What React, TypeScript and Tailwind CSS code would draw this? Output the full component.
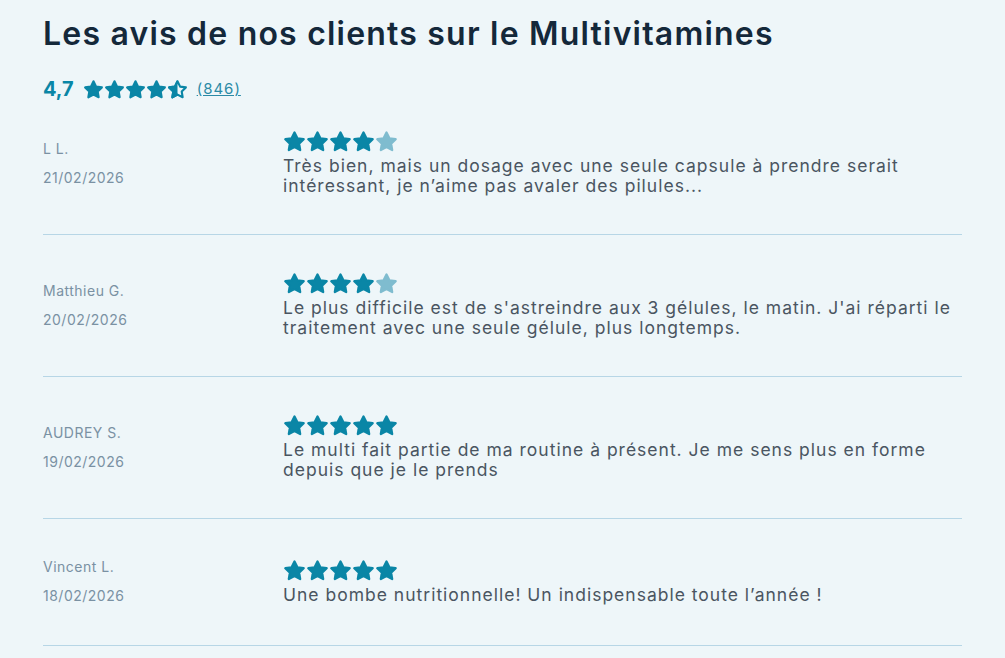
const reviews = [
  {
    name: "L L.",
    date: "21/02/2026",
    rating: 4,
    text: "Très bien, mais un dosage avec une seule capsule à prendre serait intéressant, je n’aime pas avaler des pilules...",
  },
  {
    name: "Matthieu G.",
    date: "20/02/2026",
    rating: 4,
    text: "Le plus difficile est de s'astreindre aux 3 gélules, le matin. J'ai réparti le traitement avec une seule gélule, plus longtemps.",
  },
  {
    name: "AUDREY S.",
    date: "19/02/2026",
    rating: 5,
    text: "Le multi fait partie de ma routine à présent. Je me sens plus en forme depuis que je le prends",
  },
  {
    name: "Vincent L.",
    date: "18/02/2026",
    rating: 5,
    text: "Une bombe nutritionnelle! Un indispensable toute l’année !",
  },
];

const starPoints =
  "12,2.6 15,8.7 21.6,9.6 16.8,14.3 17.9,20.9 12,17.8 6.1,20.9 7.2,14.3 2.4,9.6 9,8.7";

function Star({ size, color, half = false }: { size: number; color: string; half?: boolean }) {
  if (half) {
    return (
      <svg width={size} height={size} viewBox="0 0 24 24">
        <defs>
          <clipPath id="half-left">
            <rect x="0" y="0" width="12" height="24" />
          </clipPath>
        </defs>
        <polygon points={starPoints} fill="none" stroke={color} strokeWidth="2.4" strokeLinejoin="round" />
        <polygon points={starPoints} fill={color} stroke={color} strokeWidth="2.4" strokeLinejoin="round" clipPath="url(#half-left)" />
      </svg>
    );
  }
  return (
    <svg width={size} height={size} viewBox="0 0 24 24">
      <polygon points={starPoints} fill={color} stroke={color} strokeWidth="2.4" strokeLinejoin="round" />
    </svg>
  );
}

export default function App() {
  return (
    <div
      className="min-h-screen bg-[#eef6f9] px-[43px] pt-[14px]"
      style={{ fontFamily: "Inter, 'Noto Sans', sans-serif" }}
    >
      <h1 className="text-[32px] font-semibold leading-[40px] tracking-[1.2px] text-[#14283a]">
        Les avis de nos clients sur le Multivitamines
      </h1>

      <div className="mt-[20px] flex items-center">
        <span className="mr-[9px] text-[20px] font-bold text-[#0a86a6]">4,7</span>
        <div className="flex">
          <Star size={21} color="#0a86a6" />
          <Star size={21} color="#0a86a6" />
          <Star size={21} color="#0a86a6" />
          <Star size={21} color="#0a86a6" />
          <Star size={21} color="#0a86a6" half />
        </div>
        <a className="ml-[9px] text-[15px] tracking-[1px] text-[#2a8aa6] underline">(846)</a>
      </div>

      <div className="mt-[6px]">
        {reviews.map((r, i) => (
          <div
            key={i}
            className={`flex items-center border-b border-[#b7d6e6] ${i === 0 ? "pt-[20px]" : "pt-[37px]"} pb-[38px]`}
          >
            <div className="w-[240px] shrink-0 text-[14px] tracking-[0.5px] text-[#7a91a3]">
              <div className="leading-[22px]">{r.name}</div>
              <div className="mt-[7px] leading-[22px]">{r.date}</div>
            </div>
            <div className="flex-1">
              <div className="flex">
                {[0, 1, 2, 3, 4].map((s) => (
                  <Star key={s} size={23} color={s < r.rating ? "#0a86a6" : "#7fbccf"} />
                ))}
              </div>
              <p className="mt-[3px] text-[17.5px] leading-[20px] tracking-[1px] text-[#4a5561]">{r.text}</p>
            </div>
          </div>
        ))}
      </div>
    </div>
  );
}
